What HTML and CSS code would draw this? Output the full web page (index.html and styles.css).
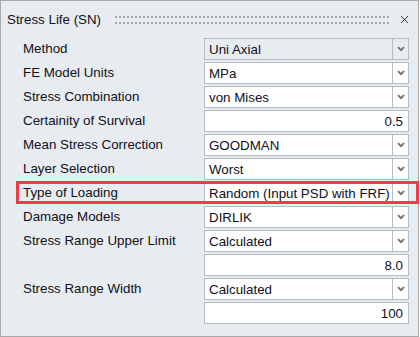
FILE: index.html
```html
<!DOCTYPE html>
<html lang="en">
<head>
    <meta charset="UTF-8">
    <meta name="viewport" content="width=device-width, initial-scale=1.0">
    <title>Stress Life (SN)</title>
    <link rel="stylesheet" href="styles.css">
</head>
<body>
    <div class="panel">
        <header class="panel-header">
            <span class="panel-title">Stress Life (SN)</span>
            <div class="grip"></div>
            <svg class="close" width="9" height="9" viewBox="0 0 9 9">
                <path d="M1 1 L8 8 M8 1 L1 8" stroke="#3a3a3a" stroke-width="1" fill="none"/>
            </svg>
        </header>

        <div class="form">
            <div class="row">
                <span class="label">Method</span>
                <div class="field select disabled"><span class="value">Uni Axial</span><span class="arrow"></span></div>
            </div>
            <div class="row">
                <span class="label">FE Model Units</span>
                <div class="field select"><span class="value">MPa</span><span class="arrow"></span></div>
            </div>
            <div class="row">
                <span class="label">Stress Combination</span>
                <div class="field select"><span class="value">von Mises</span><span class="arrow"></span></div>
            </div>
            <div class="row">
                <span class="label">Certainity of Survival</span>
                <div class="field number"><span class="value">0.5</span></div>
            </div>
            <div class="row">
                <span class="label">Mean Stress Correction</span>
                <div class="field select"><span class="value">GOODMAN</span><span class="arrow"></span></div>
            </div>
            <div class="row">
                <span class="label">Layer Selection</span>
                <div class="field select"><span class="value">Worst</span><span class="arrow"></span></div>
            </div>
            <div class="row highlight">
                <span class="label">Type of Loading</span>
                <div class="field select"><span class="value">Random (Input PSD with FRF)</span><span class="arrow"></span></div>
            </div>
            <div class="row">
                <span class="label">Damage Models</span>
                <div class="field select"><span class="value">DIRLIK</span><span class="arrow"></span></div>
            </div>
            <div class="row">
                <span class="label">Stress Range Upper Limit</span>
                <div class="field select"><span class="value">Calculated</span><span class="arrow"></span></div>
            </div>
            <div class="row">
                <span class="label"></span>
                <div class="field number"><span class="value">8.0</span></div>
            </div>
            <div class="row">
                <span class="label">Stress Range Width</span>
                <div class="field select"><span class="value">Calculated</span><span class="arrow"></span></div>
            </div>
            <div class="row">
                <span class="label"></span>
                <div class="field number"><span class="value">100</span></div>
            </div>
        </div>
    </div>
</body>
</html>
```

FILE: styles.css
```css
/* Panel */
body {
    margin: 0;
    padding: 0;
    background-color: #fff;
    font-family: "Liberation Sans", Arial, sans-serif;
    font-size: 13.33px;
    color: #10101c;
}

.panel {
    width: 419px;
    height: 337px;
    box-sizing: border-box;
    border: 1px solid #a8a8a8;
    background-color: #e7ecf0;
}

.panel-header {
    height: 36px;
    display: flex;
    align-items: center;
    padding: 0 9px 0 6px;
}

.panel-title {
    white-space: nowrap;
}

.grip {
    flex: 1;
    height: 8px;
    margin: 1px 10px 0 14px;
    background-image: url("data:image/svg+xml,%3Csvg xmlns='http://www.w3.org/2000/svg' width='4' height='6'%3E%3Crect width='2' height='2' fill='%23a6a8aa'/%3E%3C/svg%3E");
    background-size: 4px 6px;
}

.close {
    display: block;
}

/* Form rows */
.form {
    display: flex;
    flex-direction: column;
    gap: 2px;
    margin-top: 1px;
    padding-left: 22px;
}

.row {
    display: flex;
    height: 22px;
    position: relative;
}

.label {
    width: 181px;
    line-height: 22px;
    white-space: nowrap;
}

.field {
    width: 205px;
    box-sizing: border-box;
    border: 1px solid #b6bbbf;
    background-color: #fff;
    display: flex;
    align-items: center;
}

.field.disabled {
    background-color: #e7ecf0;
}

.value {
    flex: 1;
    padding: 0 4px;
    white-space: nowrap;
    overflow: hidden;
}

.number .value {
    text-align: right;
    padding-right: 5px;
}

.arrow {
    width: 15px;
    height: 100%;
    border-left: 1px solid #b6bbbf;
    background-image: url("data:image/svg+xml,%3Csvg xmlns='http://www.w3.org/2000/svg' width='8' height='6' viewBox='0 0 8 6'%3E%3Cpath d='M1 1.2 L4 4.2 L7 1.2' stroke='%23707070' stroke-width='1.8' fill='none'/%3E%3C/svg%3E");
    background-repeat: no-repeat;
    background-position: 4px 7px;
}

/* Highlighted row */
.highlight::after {
    content: "";
    position: absolute;
    top: -1px;
    bottom: 0;
    left: -7px;
    right: -1px;
    border: 3px solid #ef3d48;
    pointer-events: none;
}
```
